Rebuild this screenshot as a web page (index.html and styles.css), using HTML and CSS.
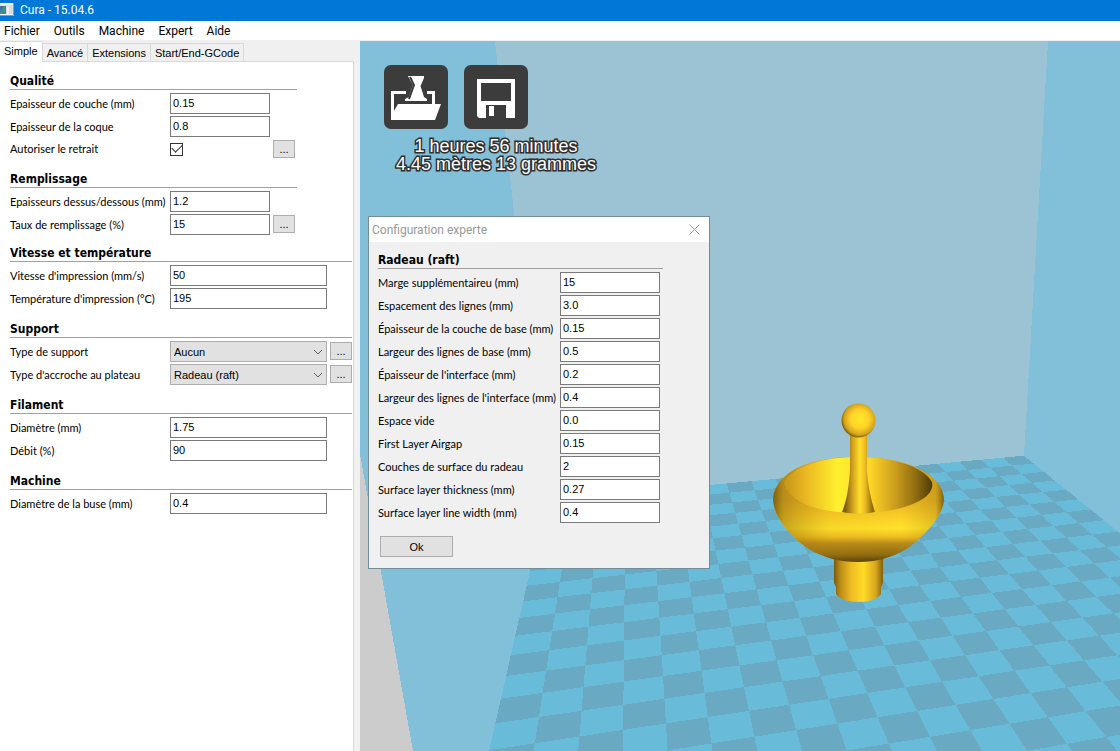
FILE: index.html
```
<!DOCTYPE html>
<html lang="fr">
<head>
<meta charset="utf-8">
<title>Cura - 15.04.6</title>
<link rel="stylesheet" href="styles.css">
</head>
<body>
<div class="app">
  <header class="titlebar">
    <svg class="app-icon" width="14" height="13" viewBox="0 0 14 13" aria-hidden="true">
      <rect width="14" height="13" fill="#f4f6f7"/>
      <rect y="2" width="13" height="9" fill="#d5dde2"/>
      <rect y="3" width="6" height="8" fill="#3f8f86"/>
      <path d="M0 3h4l-4 6z" fill="#3d72a8"/>
      <rect x="7" y="3" width="2" height="8" fill="#eef2f4"/>
      <path d="M13.500 0v12.500H0" fill="none" stroke="#8d9ba5"/>
    </svg>
    <h1 class="app-title">Cura - 15.04.6</h1>
  </header>

  <nav class="menubar">
    <button class="menu-item" type="button">Fichier</button>
    <button class="menu-item" type="button">Outils</button>
    <button class="menu-item" type="button">Machine</button>
    <button class="menu-item" type="button">Expert</button>
    <button class="menu-item" type="button">Aide</button>
  </nav>

  <div class="workspace">
    <aside class="sidebar">
      <div class="tabs" role="tablist">
        <button class="tab tab-active" type="button" role="tab" aria-selected="true">Simple</button>
        <button class="tab" type="button" role="tab" aria-selected="false">Avancé</button>
        <button class="tab" type="button" role="tab" aria-selected="false">Extensions</button>
        <button class="tab" type="button" role="tab" aria-selected="false">Start/End-GCode</button>
      </div>
      <form class="settings">
        <section class="group group-narrow">
          <h2 class="group-title">Qualité</h2>
          <div class="row"><label for="layer">Epaisseur de couche (mm)</label><input class="field" id="layer" type="text" value="0.15"></div>
          <div class="row"><label for="shell">Epaisseur de la coque</label><input class="field" id="shell" type="text" value="0.8"></div>
          <div class="row row-check"><label for="retract">Autoriser le retrait</label><input class="check" id="retract" type="checkbox" checked><button class="more" type="button" aria-label="Options du retrait">...</button></div>
        </section>
        <section class="group group-narrow">
          <h2 class="group-title">Remplissage</h2>
          <div class="row"><label for="topbottom">Epaisseurs dessus/dessous (mm)</label><input class="field" id="topbottom" type="text" value="1.2"></div>
          <div class="row"><label for="fill">Taux de remplissage (%)</label><input class="field" id="fill" type="text" value="15"><button class="more" type="button" aria-label="Options du remplissage">...</button></div>
        </section>
        <section class="group">
          <h2 class="group-title">Vitesse et température</h2>
          <div class="row"><label for="speed">Vitesse d'impression (mm/s)</label><input class="field" id="speed" type="text" value="50"></div>
          <div class="row"><label for="temp">Température d'impression (°C)</label><input class="field" id="temp" type="text" value="195"></div>
        </section>
        <section class="group">
          <h2 class="group-title">Support</h2>
          <div class="row"><label for="support">Type de support</label>
            <span class="combo"><select id="support"><option>Aucun</option></select><svg width="10" height="6" viewBox="0 0 10 6" aria-hidden="true"><path d="M1 1l4 4 4-4"/></svg></span>
            <button class="more" type="button" aria-label="Options du support">...</button></div>
          <div class="row"><label for="adhesion">Type d'accroche au plateau</label>
            <span class="combo"><select id="adhesion"><option>Radeau (raft)</option></select><svg width="10" height="6" viewBox="0 0 10 6" aria-hidden="true"><path d="M1 1l4 4 4-4"/></svg></span>
            <button class="more" type="button" aria-label="Options de l'accroche">...</button></div>
        </section>
        <section class="group">
          <h2 class="group-title">Filament</h2>
          <div class="row"><label for="diameter">Diamètre (mm)</label><input class="field" id="diameter" type="text" value="1.75"></div>
          <div class="row"><label for="flow">Débit (%)</label><input class="field" id="flow" type="text" value="90"></div>
        </section>
        <section class="group">
          <h2 class="group-title">Machine</h2>
          <div class="row"><label for="nozzle">Diamètre de la buse (mm)</label><input class="field" id="nozzle" type="text" value="0.4"></div>
        </section>
      </form>
    </aside>

    <main class="viewport">
      <svg class="scene" viewBox="360 41 760 710" preserveAspectRatio="xMinYMin slice" aria-hidden="true">
        <defs>
          <linearGradient id="bowlOuter" x1="0" y1="0" x2="0" y2="1">
            <stop offset="0" stop-color="#d9a81f"/><stop offset=".42" stop-color="#e8b622"/>
            <stop offset=".56" stop-color="#f9cd26"/><stop offset=".68" stop-color="#ffe32a"/><stop offset=".76" stop-color="#efbf23"/>
            <stop offset=".82" stop-color="#b98d18"/><stop offset=".93" stop-color="#8f6c12"/><stop offset="1" stop-color="#544008"/>
          </linearGradient>
          <linearGradient id="bowlSides" x1="0" y1="0" x2="1" y2="0">
            <stop offset="0" stop-color="#5a4208" stop-opacity=".75"/><stop offset=".06" stop-color="#8a660e" stop-opacity=".5"/>
            <stop offset=".34" stop-color="#c08a12" stop-opacity=".1"/><stop offset=".75" stop-color="#a87a10" stop-opacity="0"/>
            <stop offset=".95" stop-color="#8a660e" stop-opacity=".25"/><stop offset="1" stop-color="#5a4208" stop-opacity=".75"/>
          </linearGradient>
          <linearGradient id="bowlInner" x1="0" y1="0" x2="1" y2="0">
            <stop offset="0" stop-color="#c39418"/><stop offset=".14" stop-color="#e9b622"/>
            <stop offset=".36" stop-color="#fff02d"/><stop offset=".58" stop-color="#ffd528"/>
            <stop offset=".76" stop-color="#c79a1b"/><stop offset=".9" stop-color="#8a6811"/><stop offset="1" stop-color="#4d3a07"/>
          </linearGradient>
          <linearGradient id="stem" gradientUnits="userSpaceOnUse" x1="845" y1="0" x2="872" y2="0">
            <stop offset="0" stop-color="#7a5a0d"/><stop offset=".25" stop-color="#c99a1c"/>
            <stop offset=".55" stop-color="#ffe029"/><stop offset=".75" stop-color="#ecb923"/><stop offset="1" stop-color="#92700f"/>
          </linearGradient>
          <linearGradient id="foot" x1="0" y1="0" x2="1" y2="0">
            <stop offset="0" stop-color="#7a5a0d"/><stop offset=".12" stop-color="#b88b17"/><stop offset=".35" stop-color="#efbb23"/>
            <stop offset=".6" stop-color="#ffdb28"/><stop offset=".85" stop-color="#d9a71f"/><stop offset="1" stop-color="#7f600e"/>
          </linearGradient>
          <radialGradient id="ball" cx=".54" cy=".46" r=".56">
            <stop offset="0" stop-color="#ffec2c"/><stop offset=".5" stop-color="#ffd027"/>
            <stop offset=".82" stop-color="#d3a31d"/><stop offset="1" stop-color="#6f560c"/>
          </radialGradient>
        </defs>
        <g shape-rendering="crispEdges">
          <rect x="360" y="41" width="760" height="710" fill="#82bfd8"/>
          <path d="M495 41H1048L1024 456L546 500z" fill="#9bc3d3"/>
          <path d="M360 454L413 751H360z" fill="#ccc"/>
          <path id="bed" fill="#69bbda"/>
          <path id="tiles" fill="#6aa9c2"/>
        </g>
        <g>
          <path d="M834 552H883V583L881 587V594C878 599 870 602 859 602S839 599 836 594V587L834 583z" fill="url(#foot)"/>
          <path d="M773 500C773 490 779 480 789 473C806 461 831 457 858 457C886 457 910 462 928 474C938 481 944 490 944 500C943 516 925 535 908 548C892 558 876 562 858 562C840 562 824 558 809 549C789 536 774 517 773 500z" fill="url(#bowlOuter)"/>
          <path d="M773 500C773 490 779 480 789 473C806 461 831 457 858 457C886 457 910 462 928 474C938 481 944 490 944 500C943 516 925 535 908 548C892 558 876 562 858 562C840 562 824 558 809 549C789 536 774 517 773 500z" fill="url(#bowlSides)"/>
          <path d="M784 482C796 463 829 457 858 457C890 457 922 465 932 482C936 500 900 513 858 513C818 513 787 502 784 482z" fill="url(#bowlInner)"/>
          <path d="M850 434H867V470C868 486 871 500 875 512C865 514 852 514 842 512C847 500 849 486 850 470z" fill="url(#stem)"/>
          <circle cx="858.500" cy="420.500" r="17" fill="url(#ball)"/>
        </g>
      </svg>

      <div class="overlay">
        <div class="tools">
          <button class="tool" type="button" aria-label="Charger un modèle">
            <svg width="64" height="64" viewBox="0 0 64 64" aria-hidden="true">
              <path d="M7 26H22V29H10V46L14 39H48V29H43V26H51V39H57L51 55H7z" fill="#fff"/>
              <path d="M24 11H40V13L36.500 21L40 32L43 34V36H21V34L25 32L29 20L25 13z" fill="#fff"/>
              <path d="M26 12L30 20L25 34" fill="none" stroke="#3c3c3c" stroke-width="2"/>
            </svg>
          </button>
          <button class="tool" type="button" aria-label="Enregistrer">
            <svg width="64" height="64" viewBox="0 0 64 64" aria-hidden="true">
              <path d="M13 14H51V53H42V40H22V53H15L13 51zM17 18V36H47V18z" fill="#fff" fill-rule="evenodd"/>
              <rect x="25" y="41" width="5" height="10" fill="#fff"/>
            </svg>
          </button>
        </div>
        <p class="estimate">1 heures 56 minutes<br>4.45 mètres 13 grammes</p>
      </div>

      <div class="dialog" role="dialog" aria-labelledby="dialog-title">
        <div class="dialog-bar">
          <span id="dialog-title">Configuration experte</span>
          <button class="close" type="button" aria-label="Fermer"><svg width="11" height="11" viewBox="0 0 11 11" aria-hidden="true"><path d="M.5.5l10 10M10.500.5l-10 10"/></svg></button>
        </div>
        <form class="dialog-body">
          <h2 class="group-title">Radeau (raft)</h2>
          <div class="row"><label for="r1">Marge supplémentaireu (mm)</label><input class="field" id="r1" type="text" value="15"></div>
          <div class="row"><label for="r2">Espacement des lignes (mm)</label><input class="field" id="r2" type="text" value="3.0"></div>
          <div class="row"><label for="r3">Épaisseur de la couche de base (mm)</label><input class="field" id="r3" type="text" value="0.15"></div>
          <div class="row"><label for="r4">Largeur des lignes de base (mm)</label><input class="field" id="r4" type="text" value="0.5"></div>
          <div class="row"><label for="r5">Épaisseur de l'interface (mm)</label><input class="field" id="r5" type="text" value="0.2"></div>
          <div class="row"><label for="r6">Largeur des lignes de l'interface (mm)</label><input class="field" id="r6" type="text" value="0.4"></div>
          <div class="row"><label for="r7">Espace vide</label><input class="field" id="r7" type="text" value="0.0"></div>
          <div class="row"><label for="r8">First Layer Airgap</label><input class="field" id="r8" type="text" value="0.15"></div>
          <div class="row"><label for="r9">Couches de surface du radeau</label><input class="field" id="r9" type="text" value="2"></div>
          <div class="row"><label for="r10">Surface layer thickness (mm)</label><input class="field" id="r10" type="text" value="0.27"></div>
          <div class="row"><label for="r11">Surface layer line width (mm)</label><input class="field" id="r11" type="text" value="0.4"></div>
          <button class="ok" type="button">Ok</button>
        </form>
      </div>
    </main>
  </div>
</div>
<script src="scene.js"></script>
</body>
</html>
```
FILE: styles.css
```
* { box-sizing: border-box; }

body {
  margin: 0;
  color: #000;
  background: #f0f0f0;
  font: 11px/14px "Liberation Sans", Arial, sans-serif;
}

button, input, select { font: inherit; color: inherit; }
button { padding: 0; }

.app { display: flex; flex-direction: column; min-height: 100vh; }

.titlebar {
  display: flex;
  align-items: center;
  gap: 6px;
  height: 21px;
  padding-bottom: 2px;
  color: #fff;
  background: #0078d7;
}
.app-icon { flex: none; }
.app-title { margin: 0; font: 12px/16px Roboto, "Open Sans", sans-serif; }

.menubar {
  display: flex;
  gap: 14px;
  height: 19px;
  padding-left: 4px;
  background: #fff;
}
.menu-item { border: 0; background: none; font: 12px/18px Roboto, "Open Sans", sans-serif; }

.workspace { display: flex; flex: 1; padding-top: 1px; }

.sidebar { display: flex; flex-direction: column; flex: none; width: 354px; margin-right: 6px; }
.tabs { display: flex; align-items: flex-end; height: 21px; }
.tabs::after { content: ""; flex: 1; border-bottom: 1px solid #d9d9d9; }
.tab {
  height: 19px;
  padding: 1px 4px 0;
  border: 1px solid #d9d9d9;
  border-left: 0;
  background: #f0f0f0;
}
.tab-active {
  height: 21px;
  padding: 0 4px 2px;
  border-bottom: 0;
  background: #fff;
}
.settings {
  flex: 1;
  padding: 10px 1px 0 10px;
  border-right: 1px solid #d9d9d9;
  background: #fff;
}

.group { margin-bottom: 11px; }
.group-narrow { width: 287px; margin-bottom: 9px; }
.group-title {
  margin: 0 0 3px;
  padding-top: 2px;
  border-bottom: 1px solid #a0a0a0;
  font: bold 12px/15px "DejaVu Sans Condensed", "DejaVu Sans", sans-serif;
}
.row {
  display: grid;
  grid-template-columns: 160px 157px 25px;
  height: 21px;
  margin-bottom: 2px;
}
.group-narrow .row { grid-template-columns: 160px 100px 25px; }
.group-narrow .row-check { height: 20px; margin-bottom: 11px; }
.row label {
  align-self: center;
  font-family: Lato, "Liberation Sans", sans-serif;
  white-space: nowrap;
}
.field {
  width: 100%;
  height: 21px;
  padding: 0 2px 1px;
  border: 1px solid #7a7a7a;
  background: #fff;
}
.check {
  display: grid;
  place-items: center;
  align-self: center;
  width: 13px;
  height: 13px;
  margin: 0;
  border: 1px solid #333;
  appearance: none;
  background: #fff;
}
.check:checked::after {
  content: "";
  width: 9px;
  height: 5px;
  border: solid #333;
  border-width: 0 0 1px 1px;
  transform: translateY(-2px) rotate(-45deg);
}
.more {
  height: 18px;
  margin: 1px 0 0 3px;
  border: 1px solid #adadad;
  background: #e1e1e1;
  line-height: 12px;
}
.combo { display: grid; align-items: center; }
.combo select {
  grid-area: 1 / 1;
  width: 100%;
  height: 21px;
  padding: 0 3px;
  border: 1px solid #adadad;
  border-radius: 0;
  appearance: none;
  background: #e1e1e1;
}
.combo svg {
  grid-area: 1 / 1;
  justify-self: end;
  margin-right: 4px;
  fill: none;
  stroke: #606060;
  pointer-events: none;
}

.viewport { position: relative; flex: 1; min-width: 0; overflow: hidden; background: #82bfd8; }
.scene { position: absolute; width: 100%; height: 100%; }
.overlay { position: absolute; top: 24px; left: 24px; }
.tools { display: flex; gap: 16px; }
.tool {
  width: 64px;
  height: 64px;
  border: 0;
  border-radius: 7px;
  background: #3c3c3c;
}
.tool svg { display: block; }
.estimate {
  margin: 8px 0 0 12px;
  color: #fff;
  font: 18px/18px "Liberation Sans", Arial, sans-serif;
  text-align: center;
  white-space: nowrap;
  paint-order: stroke fill;
  -webkit-text-stroke: 3px #303030;
}

.dialog {
  position: absolute;
  top: 175px;
  left: 8px;
  width: 342px;
  border: 1px solid #728d98;
  background: #f0f0f0;
}
.dialog-bar {
  display: flex;
  align-items: center;
  justify-content: space-between;
  height: 25px;
  padding: 0 9px 0 3px;
  color: #999;
  background: #fff;
  font: 12px/16px Roboto, "Open Sans", sans-serif;
}
.close { display: flex; border: 0; background: none; }
.close path { stroke: #999; }
.dialog-body { padding: 9px 46px 11px 9px; }
.dialog-body .row { grid-template-columns: 182px 100px; }
.ok {
  width: 73px;
  height: 21px;
  margin: 11px 0 0 2px;
  border: 1px solid #adadad;
  background: #e1e1e1;
}
```
FILE: scene.js
```
// Perspective projection of a bed grid position (in 10 mm steps) into the scene.
function project(i, j) {
  const w = 1 + 0.010399 * i + 0.043774 * j;
  const x = (495.3 + 49.182 * i + 27.542 * j) / w;
  const y = (723.3 + 1.1356 * i + 5.981 * j) / w;
  return x.toFixed(1) + " " + y.toFixed(1);
}

function quad(i, j, columns, rows) {
  return "M" + [
    project(i, j),
    project(i + columns, j),
    project(i + columns, j + rows),
    project(i, j + rows)
  ].join("L") + "z";
}

const COLUMNS = 20;
const FRONT = -6;
const BACK = 14;
let tiles = "";
for (let i = 0; i < COLUMNS; i++) {
  for (let j = FRONT; j < BACK; j++) {
    if ((i + j) % 2 === 0) tiles += quad(i, j, 1, 1);
  }
}
document.getElementById("bed").setAttribute("d", quad(0, FRONT, COLUMNS, BACK - FRONT));
document.getElementById("tiles").setAttribute("d", tiles);
```
